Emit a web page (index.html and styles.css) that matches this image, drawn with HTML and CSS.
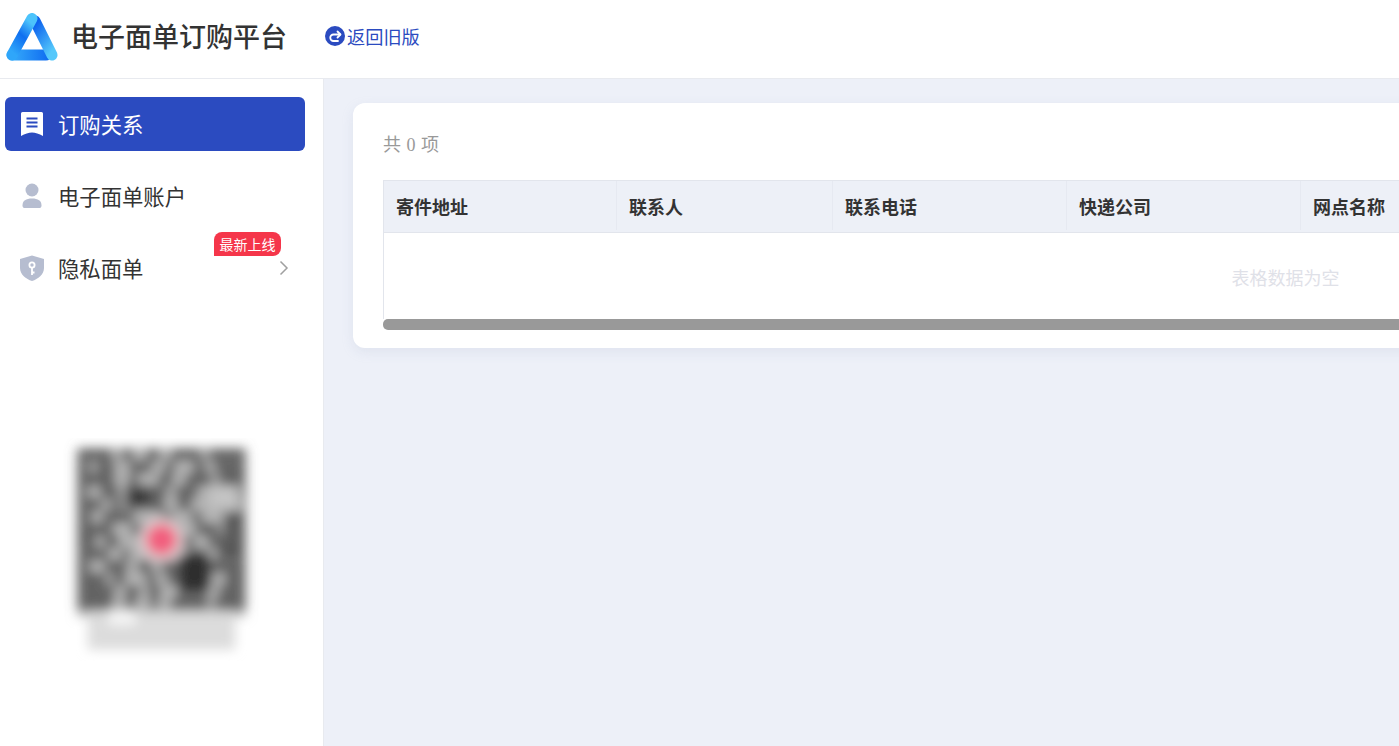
FILE: index.html
```html
<!DOCTYPE html>
<html lang="zh-CN">
<head>
<meta charset="utf-8">
<title>电子面单订购平台</title>
<link rel="stylesheet" href="styles.css">
</head>
<body>
<header class="topbar">
  <svg class="logo" viewBox="0 0 52 48" width="52" height="48" aria-hidden="true">
    <defs>
      <linearGradient id="lgLeft" x1="0.7" y1="0" x2="0.2" y2="1"><stop offset="0" stop-color="#4cc3fb"/><stop offset="0.45" stop-color="#0f6ff0"/><stop offset="1" stop-color="#2fa6fa"/></linearGradient>
      <linearGradient id="lgRight" x1="0.2" y1="0" x2="0.8" y2="1"><stop offset="0" stop-color="#0d63ee"/><stop offset="1" stop-color="#55c8fb"/></linearGradient>
      <linearGradient id="lgBase" gradientUnits="userSpaceOnUse" x1="2" y1="0" x2="44" y2="0"><stop offset="0" stop-color="#39b0fb"/><stop offset="1" stop-color="#0e6af0"/></linearGradient>
    </defs>
    <path d="M6 42H40" stroke="url(#lgBase)" stroke-width="11" stroke-linecap="round" fill="none"/>
    <path d="M29 8L46 42" stroke="url(#lgRight)" stroke-width="11" stroke-linecap="round" fill="none"/>
    <path d="M26 5.500L6 42" stroke="url(#lgLeft)" stroke-width="11" stroke-linecap="round" fill="none"/>
  </svg>
  <h1 class="brand">电子面单订购平台</h1>
  <a class="back-link" href="#">
    <svg class="back-icon" viewBox="0 0 20 20" width="20" height="20" aria-hidden="true">
      <circle cx="10" cy="10" r="10" fill="#2b4bc0"/>
      <path d="M15 8.500H8.500A3.200 3.200 0 0 0 8.500 15H13" fill="none" stroke="#fff" stroke-width="1.800" stroke-linecap="round"/>
      <path d="M12.500 5.500L15.500 8.500L12.500 11.500" fill="none" stroke="#fff" stroke-width="1.800" stroke-linecap="round" stroke-linejoin="round"/>
    </svg>
    <span>返回旧版</span>
  </a>
</header>
<div class="shell">
  <aside class="sidebar">
    <nav class="menu">
      <a class="menu-item active" href="#">
        <svg class="menu-icon" viewBox="0 0 24 26" width="24" height="26" aria-hidden="true">
          <path d="M1 2.500Q1 1 2.500 1H21.500Q23 1 23 2.500V25Q17 21.500 12 21.500Q7 21.500 1 25Z" fill="#fff"/>
          <path d="M6.500 7.500H17.500M6.500 11.500H17.500M6.500 15.500H17.500" stroke="#2b4bc0" stroke-width="2" fill="none"/>
        </svg>
        <span class="menu-label">订购关系</span>
      </a>
      <a class="menu-item" href="#">
        <svg class="menu-icon" viewBox="0 0 24 26" width="24" height="26" aria-hidden="true">
          <circle cx="12" cy="7" r="6.500" fill="#b6bdd0"/>
          <path d="M2.500 22.500C2.500 17.500 6 15.500 12 15.500S21.500 17.500 21.500 22.500C21.500 24.500 20.500 25 19 25H5C3.500 25 2.500 24.500 2.500 22.500Z" fill="#b6bdd0"/>
        </svg>
        <span class="menu-label">电子面单账户</span>
      </a>
      <a class="menu-item has-badge" href="#">
        <svg class="menu-icon" viewBox="0 0 24 26" width="24" height="26" aria-hidden="true">
          <path d="M12 0.500L24 4V13C24 19.500 18 24 12 26C6 24 0 19.500 0 13V4Z" fill="#b6bdd0"/>
          <circle cx="12" cy="10" r="2.600" fill="none" stroke="#fff" stroke-width="1.800"/>
          <path d="M12 12.500V20M12 17.500H14.500" stroke="#fff" stroke-width="1.800" fill="none"/>
        </svg>
        <span class="menu-label">隐私面单</span>
        <svg class="chevron" viewBox="0 0 10 16" width="10" height="16" aria-hidden="true"><path d="M1.500 1.500L8 8L1.500 14.500" fill="none" stroke="#a0a0a0" stroke-width="1.500"/></svg>
        <em class="badge">最新上线</em>
      </a>
    </nav>
    <svg class="qr" viewBox="0 0 190 215" width="197" height="223" role="img" aria-label="二维码">
      <defs><filter id="soft" x="-10%" y="-10%" width="120%" height="120%"><feGaussianBlur stdDeviation="5.500"/></filter></defs>
      <g filter="url(#soft)">
        <rect x="14" y="10" width="162" height="162" fill="#b4b4b4"/>
        <g stroke="#4c4c4c" stroke-width="10" fill="none">
          <path d="M14 16H176" stroke-dasharray="34 8 12 12 14 10 30 6 36"/>
          <path d="M14 28H176" stroke-dasharray="12 6 18 14 22 12 10 18 12 8 30"/>
          <path d="M14 40H176" stroke-dasharray="36 14 8 20 14 12 26 6 26"/>
          <path d="M14 52H176" stroke-dasharray="10 12 18 16 30 8 22 24 22"/>
          <path d="M14 64H176" stroke-dasharray="24 8 10 6 36 12 14 26 6 16"/>
          <path d="M14 76H176" stroke-dasharray="14 10 30 26 12 18 10 22 20"/>
          <path d="M14 88H176" stroke-dasharray="34 18 10 30 8 14 22 10 16"/>
          <path d="M14 100H176" stroke-dasharray="18 8 14 34 6 10 22 14 36"/>
          <path d="M14 112H176" stroke-dasharray="30 12 8 30 10 16 18 10 28"/>
          <path d="M14 124H176" stroke-dasharray="12 14 22 10 14 8 34 12 36"/>
          <path d="M14 136H176" stroke-dasharray="28 6 12 20 10 10 44 12 20"/>
          <path d="M14 148H176" stroke-dasharray="36 10 14 8 12 16 30 10 26"/>
          <path d="M14 160H176" stroke-dasharray="34 12 10 14 8 12 36 6 30"/>
        </g>
        <rect x="60" y="46" width="24" height="20" fill="#3a3a3a"/>
        <rect x="112" y="112" width="30" height="34" fill="#2d2d2d"/>
        <rect x="154" y="78" width="16" height="30" fill="#5a5a5a"/>
        <rect x="142" y="46" width="28" height="22" fill="#c4c4c4"/>
        <rect x="24" y="168" width="142" height="36" fill="#dcdcdc"/>
        <rect x="44" y="166" width="26" height="14" fill="#f6f6f6"/>
        <circle cx="95" cy="98" r="22" fill="#dccdd0"/>
        <circle cx="95" cy="98" r="15" fill="#f25f7e"/>
      </g>
    </svg>
  </aside>
  <main class="main">
    <section class="card">
      <p class="count">共 0 项</p>
      <div class="table">
        <div class="thead">
          <div class="th">寄件地址</div>
          <div class="th">联系人</div>
          <div class="th">联系电话</div>
          <div class="th">快递公司</div>
          <div class="th">网点名称</div>
        </div>
        <div class="tbody">表格数据为空</div>
        <div class="scrollbar"></div>
      </div>
    </section>
  </main>
</div>
</body>
</html>
```
FILE: styles.css
```css
* { box-sizing: border-box; }
html, body { margin: 0; height: 100%; overflow: hidden; }
body {
  display: flex;
  flex-direction: column;
  background: #edf0f8;
  color: #333;
  font-family: "Noto Sans CJK SC", "Liberation Sans", sans-serif;
}
a { color: inherit; text-decoration: none; }

.topbar {
  flex: none;
  display: flex;
  align-items: center;
  height: 79px;
  padding: 0 0 7px 6px;
  background: #fff;
  border-bottom: 1px solid #e8eaef;
}
.logo { flex: none; margin-top: 3px; }
.brand {
  margin: 0 0 0 13px;
  font-size: 27px;
  font-weight: 500;
  line-height: 36px;
  color: #333;
}
.back-link {
  display: flex;
  align-items: center;
  margin-left: 38px;
  font-size: 18.2px;
  color: #2b4bc0;
}
.back-icon { flex: none; margin-right: 2px; }

.shell { flex: 1; display: flex; min-height: 0; }
.sidebar {
  flex: none;
  display: flex;
  flex-direction: column;
  width: 324px;
  padding: 18px 18px 0 5px;
  background: #fff;
  border-right: 1px solid #e8eaef;
}
.menu { display: flex; flex-direction: column; gap: 18px; }
.menu-item {
  position: relative;
  display: flex;
  align-items: center;
  height: 54px;
  padding-left: 15px;
  border-radius: 6px;
  font-size: 21.33px;
  color: #333;
}
.menu-item.active { background: #2b4bc0; color: #fff; }
.menu-icon { flex: none; margin-right: 14px; }
.menu-label { margin-top: -2px; }
.chevron { margin-left: auto; margin-right: 16px; }
.badge {
  position: absolute;
  top: -9px;
  right: 24px;
  width: 67px;
  height: 24px;
  border-radius: 8px 8px 8px 0;
  background: #f5364a;
  color: #fff;
  font-size: 14px;
  font-style: normal;
  line-height: 24px;
  text-align: center;
}
.qr { flex: none; margin: 143px 0 0 58px; }

.main {
  flex: 1;
  min-width: 0;
  overflow: hidden;
  padding: 24px 0 0 29px;
}
.card {
  width: 1864px;
  height: 245px;
  padding: 30px;
  background: #fff;
  border-radius: 12px;
  box-shadow: 0 4px 12px rgba(160, 170, 200, 0.18);
}
.count {
  margin: 0 0 23px;
  font-family: "Liberation Serif", "Noto Sans CJK SC", serif;
  font-size: 18px;
  line-height: 24px;
  word-spacing: 1px;
  color: #999;
}
.table { width: 1804px; }
.thead {
  display: grid;
  grid-template-columns: 233px 216px 234px 234px 887px;
  height: 53px;
  padding-bottom: 2px;
  background: #edf0f7;
  border: 1px solid #e2e5ec;
  border-width: 1px 0 1px 1px;
}
.th {
  display: flex;
  align-items: center;
  padding-left: 12px;
  border-right: 1px solid #e6e9f1;
  font-size: 18px;
  font-weight: 700;
  color: #333;
}
.tbody {
  height: 86px;
  padding-top: 31px;
  border-left: 1px solid #e2e5ec;
  font-size: 18px;
  line-height: 26px;
  text-align: center;
  color: #dfe1e8;
}
.scrollbar {
  height: 11px;
  border-radius: 5px;
  background: #999;
}
```
